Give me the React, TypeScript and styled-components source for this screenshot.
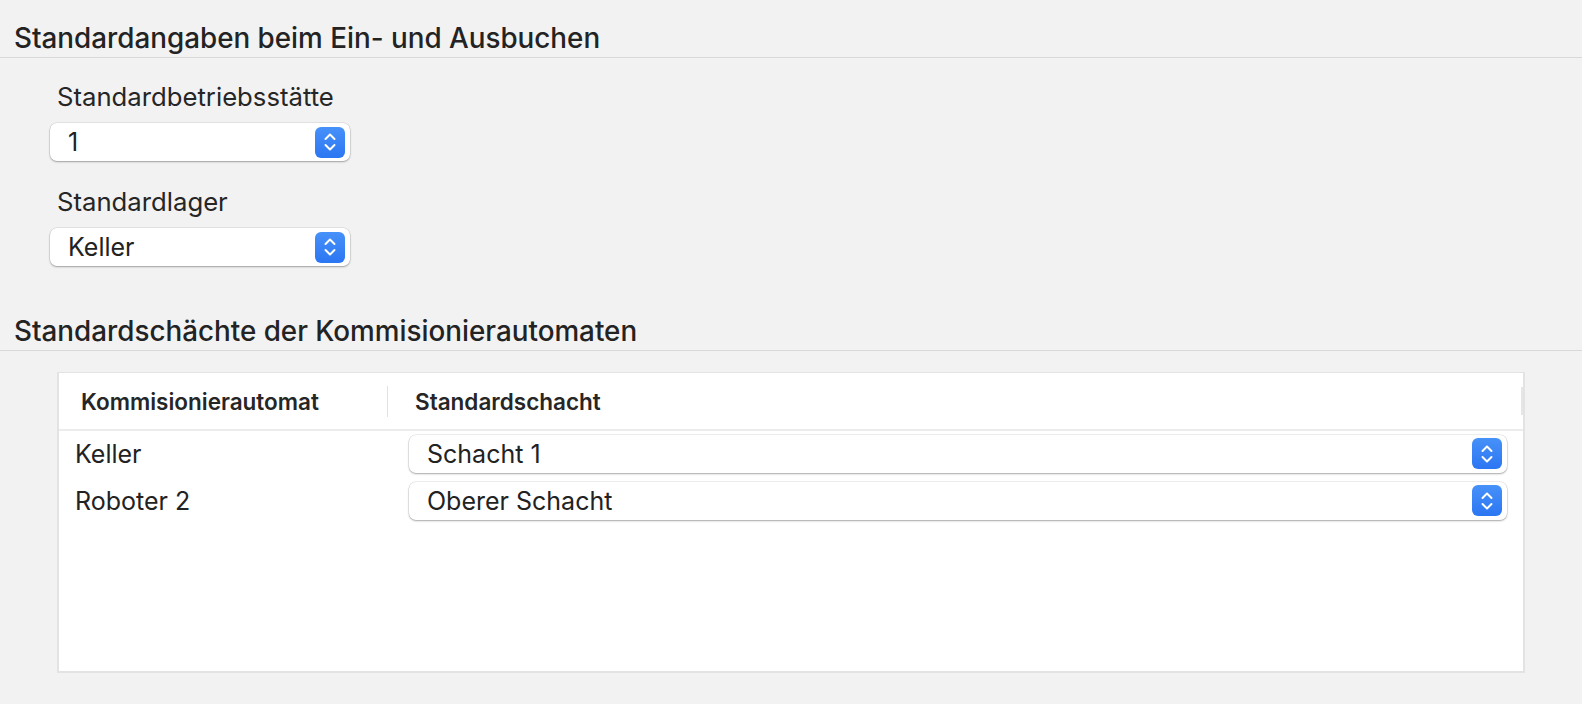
import React, { FC } from 'react';
import styled, { createGlobalStyle } from 'styled-components';

const GlobalStyle = createGlobalStyle`
  html, body {
    margin: 0;
    padding: 0;
    background: #f2f2f2;
  }
  body {
    font-family: Inter, "Noto Sans", "Liberation Sans", sans-serif;
    color: #1e1e1e;
  }
`;

const Page = styled.div`
  width: 1582px;
  height: 704px;
  background: #f2f2f2;
  overflow: hidden;
`;

const SectionTitle = styled.div<{ top: number }>`
  padding: ${(p) => p.top}px 0 0 14px;
  height: 38px;
  font-size: 27.8px;
  line-height: 38px;
  font-weight: 500;
  color: #232323;
  border-bottom: 1px solid #d9d9d9;
`;

const FieldGroup = styled.div`
  display: flex;
  flex-direction: column;
  gap: 26px;
  padding: 24px 0 46px 50px;
`;

const Field = styled.div`
  display: flex;
  flex-direction: column;
`;

const Label = styled.div`
  padding-left: 7px;
  font-size: 25.7px;
  line-height: 30px;
  color: #262626;
  margin-bottom: 11px;
`;

const Popup = styled.div<{ width?: number }>`
  display: flex;
  align-items: center;
  justify-content: space-between;
  box-sizing: border-box;
  width: ${(p) => (p.width ? `${p.width}px` : '100%')};
  height: 38px;
  padding: 0 5px 0 18px;
  background: #fff;
  border-radius: 7px;
  box-shadow: 0 0 0 0.5px rgba(0, 0, 0, 0.12), 0 1px 2px rgba(0, 0, 0, 0.3);
  font-size: 25px;
  color: #222;
`;

const Stepper = styled.div`
  display: flex;
  align-items: center;
  justify-content: center;
  width: 30px;
  height: 31px;
  border-radius: 6px;
  background: linear-gradient(#4791f9, #2b76f2);
`;

const Chevrons: FC = () => (
  <svg width="16" height="20" viewBox="0 0 16 20" fill="none">
    <path d="M3.5 7 L8 2.5 L12.5 7" stroke="#fff" strokeWidth="2" strokeLinecap="round" strokeLinejoin="round" />
    <path d="M3.5 13 L8 17.5 L12.5 13" stroke="#fff" strokeWidth="2" strokeLinecap="round" strokeLinejoin="round" />
  </svg>
);

const Select: FC<{ value: string; width?: number }> = ({ value, width }) => (
  <Popup width={width}>
    <span>{value}</span>
    <Stepper>
      <Chevrons />
    </Stepper>
  </Popup>
);

const TableWrap = styled.div`
  padding: 21px 0 0 57px;
`;

const Table = styled.div`
  box-sizing: border-box;
  width: 1468px;
  height: 301px;
  background: #fff;
  border: 2px solid #e3e3e3;
  border-top-width: 1px;
`;

const HeaderRow = styled.div`
  display: grid;
  grid-template-columns: 328px 1fr;
  height: 56px;
  align-items: center;
  border-bottom: 2px solid #ececec;
  position: relative;
`;

const HeadCell = styled.div<{ divider?: boolean }>`
  display: flex;
  align-items: center;
  height: 31px;
  padding-left: ${(p) => (p.divider ? '27px' : '22px')};
  border-left: ${(p) => (p.divider ? '1px solid #e2e2e2' : 'none')};
  font-size: 22.5px;
  font-weight: 600;
  color: #262626;
`;

const EndMark = styled.div`
  position: absolute;
  right: 0;
  top: 14px;
  width: 2px;
  height: 28px;
  background: #e6e6e6;
`;

const Body = styled.div`
  display: flex;
  flex-direction: column;
  gap: 8px;
  padding-top: 3px;
`;

const Row = styled.div`
  display: grid;
  grid-template-columns: 350px 1098px;
  align-items: center;
  height: 39px;
`;

const Cell = styled.div`
  padding-left: 16px;
  font-size: 25px;
  color: #222;
`;

const App: FC = () => (
  <Page>
    <GlobalStyle />
    <SectionTitle top={19}>Standardangaben beim Ein- und Ausbuchen</SectionTitle>
    <FieldGroup>
      <Field>
        <Label>Standardbetriebsstätte</Label>
        <Select value="1" width={300} />
      </Field>
      <Field>
        <Label>Standardlager</Label>
        <Select value="Keller" width={300} />
      </Field>
    </FieldGroup>
    <SectionTitle top={0}>Standardschächte der Kommisionierautomaten</SectionTitle>
    <TableWrap>
      <Table>
        <HeaderRow>
          <HeadCell>Kommisionierautomat</HeadCell>
          <HeadCell divider>Standardschacht</HeadCell>
          <EndMark />
        </HeaderRow>
        <Body>
          <Row>
            <Cell>Keller</Cell>
            <Select value="Schacht 1" />
          </Row>
          <Row>
            <Cell>Roboter 2</Cell>
            <Select value="Oberer Schacht" />
          </Row>
        </Body>
      </Table>
    </TableWrap>
  </Page>
);

export default App;
